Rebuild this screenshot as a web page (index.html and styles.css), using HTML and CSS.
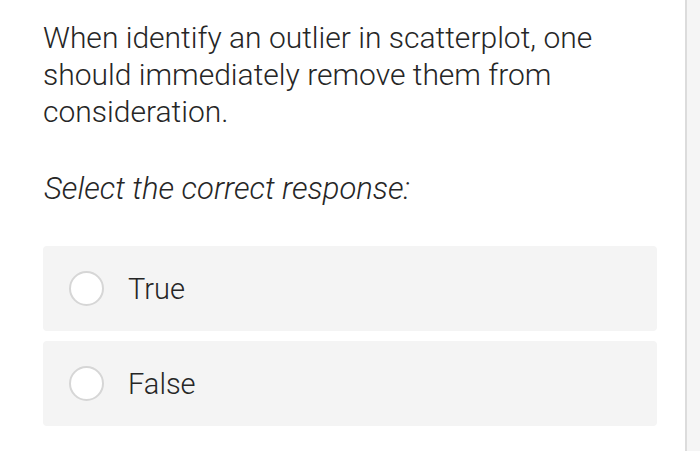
FILE: index.html
```html
<!DOCTYPE html>
<html>
<head>
<meta charset="utf-8">
<link rel="stylesheet" href="styles.css">
</head>
<body>
<div class="page">
  <main class="content">
    <p class="question">When identify an outlier in scatterplot, one should immediately remove them from consideration.</p>
    <p class="prompt">Select the correct response:</p>
    <div class="options">
      <div class="option"><span class="radio"></span><span class="label">True</span></div>
      <div class="option"><span class="radio"></span><span class="label">False</span></div>
    </div>
  </main>
  <div class="scrollbar"></div>
</div>
</body>
</html>
```
FILE: styles.css
```css
html, body {
  margin: 0;
  padding: 0;
  background: #ffffff;
}
.page {
  display: flex;
  width: 700px;
  height: 451px;
  overflow: hidden;
}
.content {
  flex: 1;
  padding: 19px 28px 0 43px;
  font-family: Roboto, "Liberation Sans", sans-serif;
  color: #262626;
}
.question {
  margin: 0;
  font-size: 30px;
  font-weight: 300;
  line-height: 37px;
  width: 600px;
}
.prompt {
  margin: 40px 0 0 1px;
  font-size: 31px;
  font-weight: 300;
  font-style: italic;
  line-height: 37px;
}
.options {
  margin-top: 39px;
  display: flex;
  flex-direction: column;
  gap: 10px;
  width: 614px;
}
.option {
  display: flex;
  align-items: center;
  height: 85px;
  background: #f4f4f4;
  border-radius: 4px;
  padding-left: 26px;
  box-sizing: border-box;
}
.radio {
  width: 31px;
  height: 31px;
  border: 2px solid #d6d6d6;
  border-radius: 50%;
  background: #ffffff;
  flex: none;
}
.label {
  margin-left: 24px;
  font-size: 29px;
  font-weight: 300;
  color: #262626;
}
.scrollbar {
  width: 13px;
  flex: none;
  border-left: 2px solid #dcdcdc;
  background: #f5f5f5;
}
```
